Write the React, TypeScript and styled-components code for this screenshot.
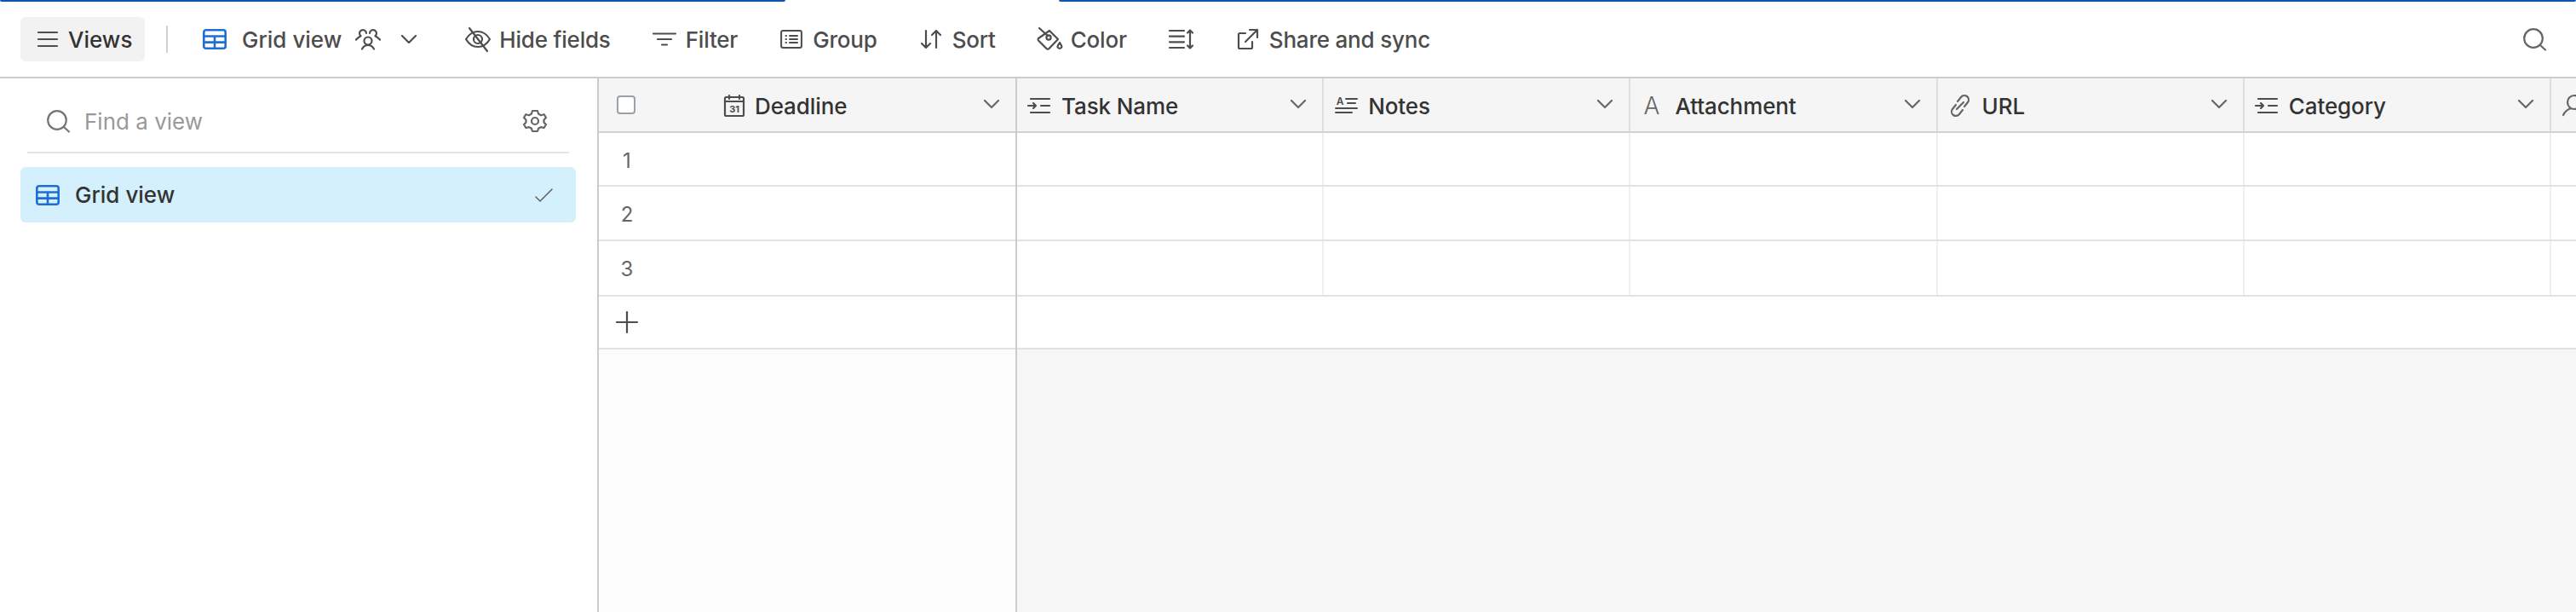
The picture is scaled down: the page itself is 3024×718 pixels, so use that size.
import React from "react"
import styled, { createGlobalStyle } from "styled-components"

const GlobalStyle = createGlobalStyle`
    html, body {
        margin: 0;
        padding: 0;
        background: #ffffff;
    }

    body {
        font-family: "Inter", "Liberation Sans", sans-serif;
        font-size: 26px;
        overflow: hidden;
    }

    * {
        box-sizing: border-box;
    }
`

const Page = styled.div`
    width: 3024px;
    height: 718px;
    overflow: hidden;

    display: flex;
    flex-flow: column;
`

const LoadingBar = styled.div`
    height: 2px;
    flex-shrink: 0;

    display: flex;
    flex-flow: row nowrap;
`

const LoadingPart = styled.div<{ $width?: number; $gap?: number }>`
    height: 2px;
    background-color: #0c57ad;
    border-radius: 0 0 2px 2px;
    width: ${props => (props.$width ? `${props.$width}px` : "auto")};
    flex: ${props => (props.$width ? "none" : 1)};
    margin-left: ${props => props.$gap || 0}px;
`

const Toolbar = styled.div`
    height: 90px;
    flex-shrink: 0;
    padding: 0 35px 0 24px;
    border-bottom: 2px solid #cccccc;

    display: flex;
    flex-flow: row nowrap;
    align-items: center;
`

const ViewsButton = styled.div`
    width: 146px;
    height: 52px;
    padding-left: 20px;
    border-radius: 6px;
    background-color: #f2f2f2;
    color: #333333;
    font-weight: 450;

    display: flex;
    align-items: center;
    gap: 12px;
`

const ToolbarDivider = styled.div`
    width: 2px;
    height: 32px;
    margin: 0 41px 0 25px;
    background-color: #d0d0d0;
`

const CurrentView = styled.div`
    color: #4d4d4d;
    font-weight: 450;

    display: flex;
    align-items: center;
`

const ViewName = styled.span`
    margin: 0 16px 0 18px;
`

const UsersSlot = styled.span`
    display: flex;
    margin-right: 24px;
`

const ToolGroup = styled.div`
    margin-left: 57px;

    display: flex;
    align-items: center;
    gap: 50px;
`

const ToolButton = styled.div<{ $gap: number; $shift: number }>`
    margin-left: ${props => props.$shift}px;
    color: #4d4d4d;
    font-weight: 450;
    letter-spacing: -0.2px;

    display: flex;
    align-items: center;
    gap: ${props => props.$gap}px;
`

const SearchButton = styled.div`
    margin-left: auto;
    display: flex;
`

const Workspace = styled.div`
    flex: 1;
    min-height: 0;

    display: flex;
    flex-flow: row nowrap;
`

const Sidebar = styled.div`
    width: 703px;
    flex-shrink: 0;
    padding: 0 25px 0 24px;
    border-right: 2px solid #cccccc;
    background-color: #ffffff;
`

const FindRow = styled.div`
    height: 88px;
    margin: 0 8px;
    padding: 14px 26px 0 23px;
    border-bottom: 2px solid #e5e5e5;
    color: #999999;

    display: flex;
    align-items: center;
    gap: 17px;

    svg:last-child {
        margin-left: auto;
    }
`

const ViewRow = styled.div`
    height: 65px;
    margin-top: 16px;
    padding: 0 27px 0 18px;
    border-radius: 6px;
    background-color: #d3f0fc;
    color: #333333;
    font-weight: 450;

    display: flex;
    align-items: center;
    gap: 18px;

    svg:last-child {
        margin-left: auto;
    }
`

const FrozenPane = styled.div`
    width: 491px;
    flex-shrink: 0;
    border-right: 2px solid #cccccc;
    background-color: #fcfcfc;
`

const ScrollPane = styled.div`
    flex: 1;
    min-width: 0;
    overflow: hidden;
    background-color: #f7f6f6;
`

const HeaderRow = styled.div`
    height: 64px;
    border-bottom: 2px solid #d2d2d2;
    background-color: #f5f5f5;

    display: flex;
    flex-flow: row nowrap;
    align-items: stretch;
`

const Checkbox = styled.div`
    width: 22px;
    height: 22px;
    margin: 20px 100px 0 21px;
    border: 2px solid #98a2ab;
    border-radius: 4px;
    background-color: #ffffff;
    flex-shrink: 0;
`

const FieldHeader = styled.div<{ $frozen?: boolean }>`
    width: ${props => (props.$frozen ? "auto" : "360.2px")};
    flex: ${props => (props.$frozen ? 1 : "none")};
    padding: ${props => (props.$frozen ? "2px 19px 0 0" : "2px 19px 0 12px")};
    border-right: ${props => (props.$frozen ? "none" : "2px solid #dedede")};
    color: #333333;
    font-weight: 450;
    letter-spacing: -0.1px;

    display: flex;
    align-items: center;
    gap: 12px;
`

const ChevronSlot = styled.span`
    margin-left: auto;
    margin-top: -4px;
    display: flex;
`

const DataRow = styled.div<{ $height: number }>`
    height: ${props => props.$height}px;
    border-bottom: 2px solid #e2e2e2;
    background-color: #ffffff;

    display: flex;
    flex-flow: row nowrap;
    align-items: stretch;
`

const RowNumber = styled.div<{ $lift?: number }>`
    width: 66px;
    padding-top: ${props => (props.$lift === undefined ? 2 : props.$lift)}px;
    color: #666666;
    font-size: 24px;

    display: flex;
    align-items: center;
    justify-content: center;
`

const DataCell = styled.div`
    width: 360.2px;
    flex: none;
    border-right: 2px solid #f0f0f0;
`

const IconBase = styled.svg`
    flex-shrink: 0;
    fill: none;
    stroke: #4d4d4d;
    stroke-width: 2.2;
    stroke-linecap: round;
    stroke-linejoin: round;
    display: block;
    overflow: visible;
`

const IconLetter = styled.text`
    fill: #4d4d4d;
    stroke: none;
    font-family: "Inter", "Liberation Sans", sans-serif;
`

type IconProps = { color?: string }

const Bars = () => (
    <IconBase width="24" height="24" viewBox="0 0 24 24">
        <path d="M1 4h22M1 12h22M1 20h22" />
    </IconBase>
)

const GridIcon = () => (
    <IconBase width="28" height="24" viewBox="0 0 28 24" style={{ stroke: "#1f6fd1", strokeWidth: 2.6 }}>
        <rect x="1.3" y="1.3" width="25.4" height="21.4" rx="2.5" />
        <path d="M1.3 8.5h25.4M1.3 15.6h25.4M14 8.5v14.2" />
    </IconBase>
)

const UsersIcon = () => (
    <IconBase width="30" height="24" viewBox="0 0 30 24">
        <circle cx="15" cy="14" r="4.500" />
        <path d="M8 23.500c1.500-3 4-4.500 7-4.500s5.500 1.500 7 4.500" />
        <path d="M13 5a4 4 0 1 0-6.500 3.200C4 9.500 2.500 10.500 1 12.500" />
        <path d="M17 5a4 4 0 1 1 6.500 3.200C26 9.500 27.500 10.500 29 12.500" />
    </IconBase>
)

const Chevron = ({ color = "#4d4d4d" }: IconProps) => (
    <IconBase width="18" height="10" viewBox="0 0 18 10" style={{ stroke: color }}>
        <path d="M1 1l8 8 8-8" />
    </IconBase>
)

const HideIcon = () => (
    <IconBase width="30" height="30" viewBox="0 0 30 30">
        <path d="M1 15c3-5 8-9 14-9s11 4 14 9c-3 5-8 9-14 9S4 20 1 15z" />
        <circle cx="15" cy="15" r="5" />
        <path d="M5 2l21 27" />
    </IconBase>
)

const FilterIcon = () => (
    <IconBase width="28" height="16" viewBox="0 0 28 16">
        <path d="M1 1.500h26M6 8h16M11 14.500h6" />
    </IconBase>
)

const GroupIcon = () => (
    <IconBase width="26" height="22" viewBox="0 0 26 22" style={{ strokeWidth: 2 }}>
        <rect x="1.100" y="1.100" width="23.800" height="19.800" rx="2" />
        <path d="M6.500 7h.5M6.500 11h.5M6.500 15h.5M11 7h9M11 11h9M11 15h9" />
    </IconBase>
)

const SortIcon = () => (
    <IconBase width="24" height="24" viewBox="0 0 24 24">
        <path d="M6 2v20M1 17l5 5 5-5M18 22V2M13 7l5-5 5 5" />
    </IconBase>
)

const ColorIcon = () => (
    <IconBase width="30" height="28" viewBox="0 0 30 28">
        <path d="M15 4l10 10-10.500 11a2 2 0 0 1-3 0L2 15.500a2 2 0 0 1 0-2.500z" />
        <circle cx="14" cy="12" r="2.600" />
        <path d="M3 1l10 9" />
        <path d="M27 18c1.500 2.500 2.400 3.700 2.400 5a2.600 2.600 0 0 1-5 0c0-1.300 1-2.500 2.600-5z" />
    </IconBase>
)

const RowHeightIcon = () => (
    <IconBase width="28" height="24" viewBox="0 0 28 24">
        <path d="M1 2h17M1 8.700h17M1 15.300h17M1 22h17M25 1.500v21M22 4.500l3-3 3 3M22 19.500l3 3 3-3" />
    </IconBase>
)

const ShareIcon = () => (
    <IconBase width="24" height="24" viewBox="0 0 24 24">
        <path d="M9 5H2.500a1.500 1.500 0 0 0-1.500 1.500v15A1.500 1.500 0 0 0 2.500 23h13a1.500 1.500 0 0 0 1.500-1.500V15" />
        <path d="M9 15L23 1M14 1h9v9" />
    </IconBase>
)

const SearchIcon = ({ color = "#666666" }: IconProps) => (
    <IconBase width="27" height="26" viewBox="0 0 27 26" style={{ stroke: color }}>
        <circle cx="12" cy="12" r="10.800" />
        <path d="M20 20l6 5.500" />
    </IconBase>
)

const GearIcon = () => (
    <IconBase width="28" height="26" viewBox="0 0 28 26" style={{ stroke: "#666666" }}>
        <path d="M11 1h6l1 3.500 3 1.700 3.600-1L27 9l-2.500 2.600v3L27 17l-2.400 4-3.600-.9-3 1.700L17 25h-6l-1-3.200-3-1.700-3.600.9L1 17l2.500-2.400v-3L1 9l2.400-3.800 3.600 1 3-1.700z" />
        <circle cx="14" cy="13" r="4" />
    </IconBase>
)

const CheckIcon = () => (
    <IconBase width="21" height="16" viewBox="0 0 21 16" style={{ stroke: "#666666", strokeWidth: 1.6 }}>
        <path d="M1 10l5 5L20 1" />
    </IconBase>
)

const PlusIcon = () => (
    <IconBase width="24" height="24" viewBox="0 0 24 24">
        <path d="M12 0v24M0 12h24" />
    </IconBase>
)

const CalendarIcon = () => (
    <IconBase width="28" height="26" viewBox="0 0 28 26">
        <rect x="5" y="3" width="22" height="22" rx="1.500" />
        <path d="M5 8h22M10 1v4M22 1v4" />
        <IconLetter x="16" y="21" fontSize="11" fontWeight="700" textAnchor="middle">31</IconLetter>
    </IconBase>
)

const SingleLineIcon = () => (
    <IconBase width="28" height="20" viewBox="0 0 28 20">
        <path d="M4 2h22M1 10h9M7 7l3 3-3 3M16 10h10M4 18h22" />
    </IconBase>
)

const NotesIcon = () => (
    <IconBase width="28" height="24" viewBox="0 0 28 24" style={{ strokeWidth: 2 }}>
        <IconLetter x="7" y="11" fontSize="12" fontWeight="600" textAnchor="middle">A</IconLetter>
        <path d="M14 4h13M16 9h9M2 15h25M2 20h19" />
    </IconBase>
)

const LetterIcon = () => (
    <IconBase width="28" height="24" viewBox="0 0 28 24">
        <IconLetter x="13" y="21.500" fontSize="28" fontWeight="300" textAnchor="middle" style={{ fill: "#666666" }}>A</IconLetter>
    </IconBase>
)

const LinkIcon = () => (
    <IconBase width="28" height="26" viewBox="0 0 28 26" style={{ stroke: "#666666" }}>
        <path d="M11 8l4-5a5 5 0 0 1 8 6l-4 5" />
        <path d="M17 18l-4 5a5 5 0 0 1-8-6l4-5" />
        <path d="M10 17l8-8" />
    </IconBase>
)

const PersonIcon = () => (
    <IconBase width="28" height="26" viewBox="0 0 28 26" style={{ stroke: "#666666" }}>
        <circle cx="15" cy="9" r="8" />
        <path d="M2 24c2-4 5-6.500 8-7.500" />
    </IconBase>
)

const Fields = [
    { name: "Task Name", icon: <SingleLineIcon /> },
    { name: "Notes", icon: <NotesIcon /> },
    { name: "Attachment", icon: <LetterIcon /> },
    { name: "URL", icon: <LinkIcon /> },
    { name: "Category", icon: <SingleLineIcon /> }
]

const Tools = [
    { label: "Hide fields", icon: <HideIcon />, gap: 10, shift: 0 },
    { label: "Filter", icon: <FilterIcon />, gap: 11, shift: -1 },
    { label: "Group", icon: <GroupIcon />, gap: 12, shift: 0 },
    { label: "Sort", icon: <SortIcon />, gap: 13, shift: 1 },
    { label: "Color", icon: <ColorIcon />, gap: 10, shift: -2 },
    { label: "", icon: <RowHeightIcon />, gap: 0, shift: -1 },
    { label: "Share and sync", icon: <ShareIcon />, gap: 13, shift: 3 }
]

const EmptyCells = () => (
    <>
        {Fields.map(field => <DataCell key={field.name} />)}
        <DataCell />
    </>
)

export default function App() {
    return (
        <Page>
            <GlobalStyle />
            <LoadingBar>
                <LoadingPart $width={922} />
                <LoadingPart $gap={321} />
            </LoadingBar>

            <Toolbar>
                <ViewsButton>
                    <Bars />
                    <span>Views</span>
                </ViewsButton>
                <ToolbarDivider />
                <CurrentView>
                    <GridIcon />
                    <ViewName>Grid view</ViewName>
                    <UsersSlot><UsersIcon /></UsersSlot>
                    <Chevron />
                </CurrentView>
                <ToolGroup>
                    {Tools.map(tool => (
                        <ToolButton key={tool.label || "row-height"} $gap={tool.gap} $shift={tool.shift}>
                            {tool.icon}
                            {tool.label && <span>{tool.label}</span>}
                        </ToolButton>
                    ))}
                </ToolGroup>
                <SearchButton><SearchIcon /></SearchButton>
            </Toolbar>

            <Workspace>
                <Sidebar>
                    <FindRow>
                        <SearchIcon color="#757575" />
                        <span>Find a view</span>
                        <GearIcon />
                    </FindRow>
                    <ViewRow>
                        <GridIcon />
                        <span>Grid view</span>
                        <CheckIcon />
                    </ViewRow>
                </Sidebar>

                <FrozenPane>
                    <HeaderRow>
                        <Checkbox />
                        <FieldHeader $frozen>
                            <CalendarIcon />
                            <span>Deadline</span>
                            <ChevronSlot><Chevron color="#666666" /></ChevronSlot>
                        </FieldHeader>
                    </HeaderRow>
                    <DataRow $height={63}><RowNumber $lift={3}>1</RowNumber></DataRow>
                    <DataRow $height={64}><RowNumber>2</RowNumber></DataRow>
                    <DataRow $height={65}><RowNumber>3</RowNumber></DataRow>
                    <DataRow $height={62}>
                        <RowNumber $lift={0}><PlusIcon /></RowNumber>
                    </DataRow>
                </FrozenPane>

                <ScrollPane>
                    <HeaderRow>
                        {Fields.map(field => (
                            <FieldHeader key={field.name}>
                                {field.icon}
                                <span>{field.name}</span>
                                <ChevronSlot><Chevron color="#666666" /></ChevronSlot>
                            </FieldHeader>
                        ))}
                        <FieldHeader><PersonIcon /></FieldHeader>
                    </HeaderRow>
                    <DataRow $height={63}><EmptyCells /></DataRow>
                    <DataRow $height={64}><EmptyCells /></DataRow>
                    <DataRow $height={65}><EmptyCells /></DataRow>
                    <DataRow $height={62} />
                </ScrollPane>
            </Workspace>
        </Page>
    )
}
